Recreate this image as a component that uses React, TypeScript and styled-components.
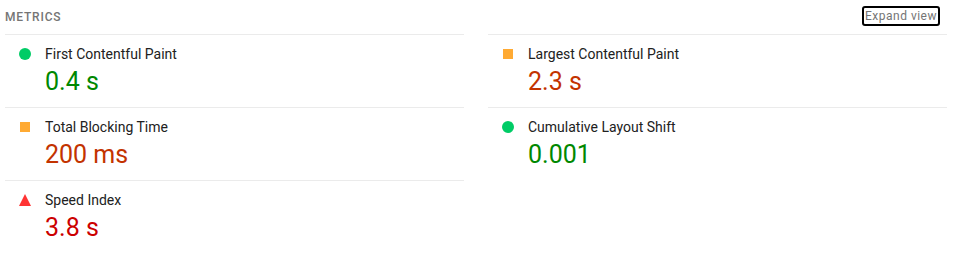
import React, { FC } from 'react';
import styled, { createGlobalStyle } from 'styled-components';

const GlobalStyle = createGlobalStyle`
    body {
        margin: 0;
        background: #fff;
        font-family: Roboto, 'Liberation Sans', sans-serif;
    }
`;

type Rating = 'pass' | 'average' | 'fail';

const colors: Record<Rating, { icon: string; value: string }> = {
    pass: { icon: '#0c6', value: '#080' },
    average: { icon: '#fa3', value: '#c33300' },
    fail: { icon: '#f33', value: '#c00' },
};

const metrics: { label: string; value: string; rating: Rating }[] = [
    { label: 'First Contentful Paint', value: '0.4 s', rating: 'pass' },
    { label: 'Largest Contentful Paint', value: '2.3 s', rating: 'average' },
    { label: 'Total Blocking Time', value: '200 ms', rating: 'average' },
    { label: 'Cumulative Layout Shift', value: '0.001', rating: 'pass' },
    { label: 'Speed Index', value: '3.8 s', rating: 'fail' },
];

const Section = styled.section`
    width: 942px;
    padding-left: 5px;
`;

const Header = styled.div`
    height: 34px;
    display: flex;
    align-items: center;
    justify-content: space-between;
`;

const Title = styled.div`
    font-size: 12px;
    font-weight: 500;
    letter-spacing: 0.8px;
    color: #757575;
    text-transform: uppercase;
`;

const ExpandButton = styled.button`
    margin: 0 7px 2px 0;
    height: 20px;
    padding: 0 1px;
    border: 2px solid #000;
    border-radius: 3px;
    background: #fff;
    font-family: Roboto, 'Liberation Sans', sans-serif;
    font-size: 12px;
    letter-spacing: 0.5px;
    color: #757575;
    line-height: 16px;
    cursor: pointer;
`;

const Grid = styled.div`
    display: grid;
    grid-template-columns: 1fr 1fr;
    column-gap: 24px;
`;

const Metric = styled.div`
    border-top: 1px solid #ebebeb;
    padding: 9px 0 11px 14px;
    display: grid;
    grid-template-columns: 12px 1fr;
    column-gap: 14px;
    row-gap: 4px;
`;

const IconBox = styled.div`
    height: 20px;
    display: flex;
    align-items: center;
    justify-content: center;
`;

const Dot = styled.span<{ $color: string }>`
    width: 12px;
    height: 12px;
    border-radius: 50%;
    background: ${(p) => p.$color};
`;

const Square = styled.span<{ $color: string }>`
    width: 10px;
    height: 10px;
    background: ${(p) => p.$color};
`;

const Label = styled.div`
    font-size: 14px;
    line-height: 20px;
    color: #212121;
`;

const Value = styled.div<{ $color: string }>`
    grid-column: 2;
    font-size: 25px;
    line-height: 28px;
    color: ${(p) => p.$color};
`;

const RatingIcon: FC<{ rating: Rating }> = ({ rating }) => {
    const c = colors[rating].icon;
    if (rating === 'pass') return <Dot $color={c} />;
    if (rating === 'average') return <Square $color={c} />;
    return (
        <svg width="12" height="12" viewBox="0 0 12 12">
            <polygon points="6,0 12,12 0,12" fill={c} />
        </svg>
    );
};

const App: FC = () => {
    return (
        <>
            <GlobalStyle />
            <Section>
                <Header>
                    <Title>Metrics</Title>
                    <ExpandButton>Expand view</ExpandButton>
                </Header>
                <Grid>
                    {metrics.map((m) => (
                        <Metric key={m.label}>
                            <IconBox>
                                <RatingIcon rating={m.rating} />
                            </IconBox>
                            <Label>{m.label}</Label>
                            <Value $color={colors[m.rating].value}>{m.value}</Value>
                        </Metric>
                    ))}
                </Grid>
            </Section>
        </>
    );
};
export default App;
